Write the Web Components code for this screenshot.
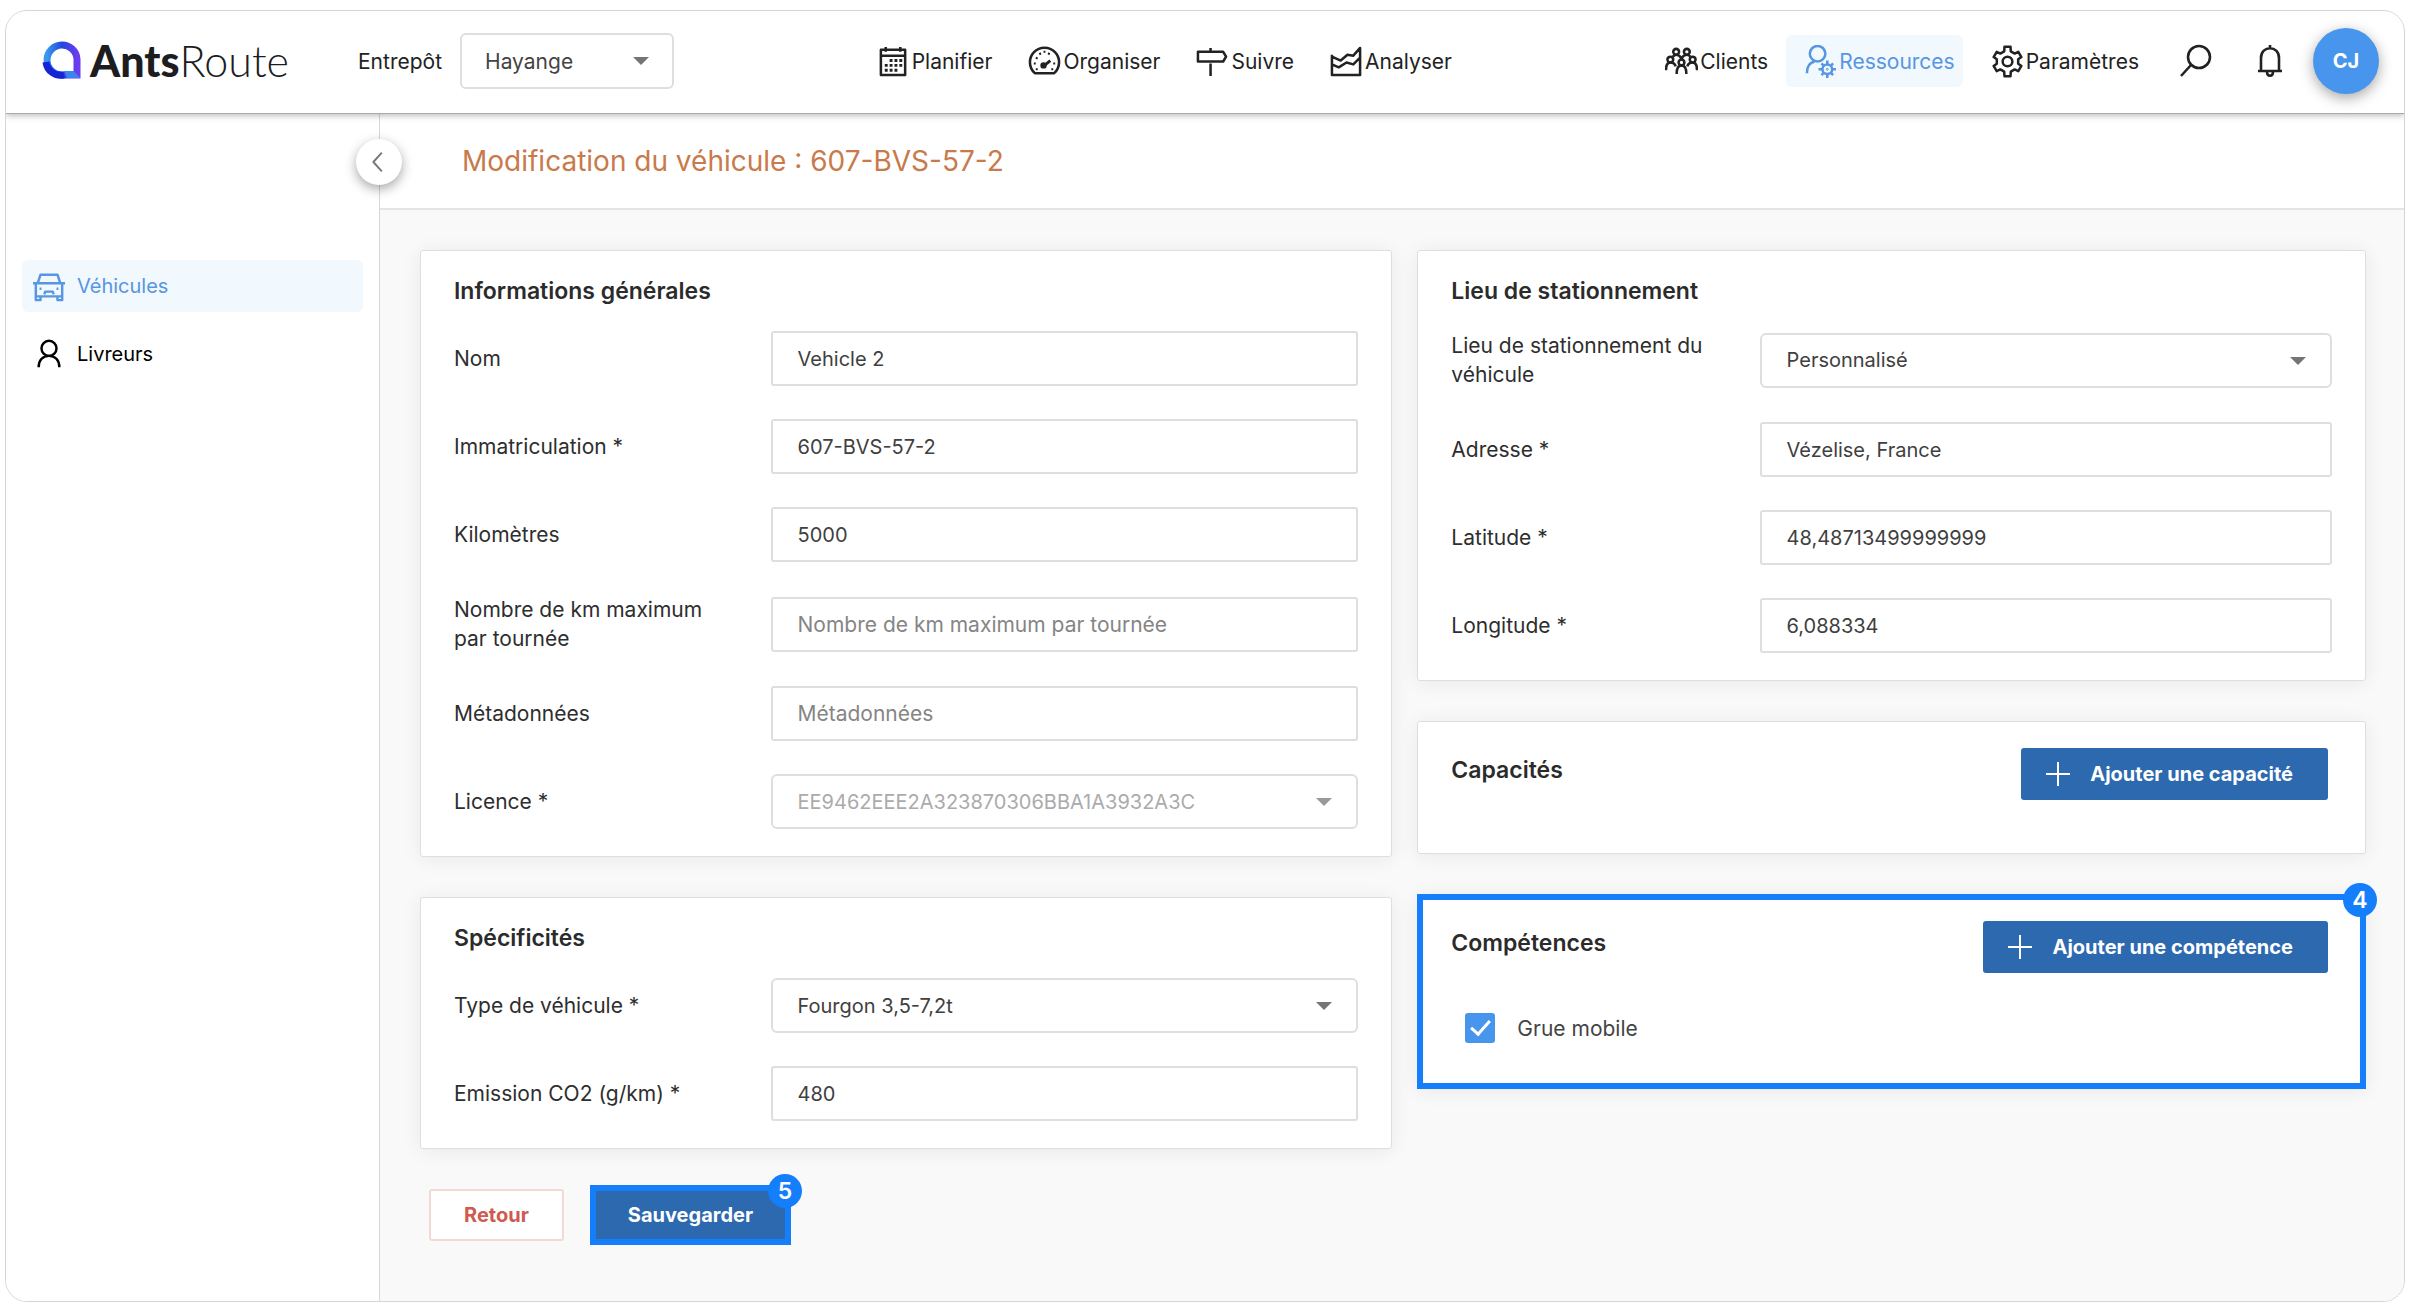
<!DOCTYPE html>
<html lang="fr">
<head>
<meta charset="utf-8">
<meta name="viewport" content="width=device-width, initial-scale=1">
<title>AntsRoute - Modification du véhicule</title>
<style>
    html {
        height: 100%;
    }

    body {
        margin: 0;
        min-height: 100%;
        display: flex;
        background: #fff;
        color: #2e2e2e;
        font-family: Inter, "Open Sans", sans-serif;
        font-size: 20px;
        --blue: #4795ec;
        --link: #5796e0;
        --primary: #2d69ae;
        --mark: #147efb;
        --line: #dedede;
        --label-size: 21px;
    }
</style>
</head>
<body>
<ants-app>
    <ants-header slot="header"></ants-header>
    <ants-sidebar slot="sidebar"></ants-sidebar>
    <span slot="title">Modification du véhicule : 607-BVS-57-2</span>

    <ants-card slot="left" heading="Informations générales">
        <form-field label="Nom" value="Vehicle 2"></form-field>
        <form-field label="Immatriculation *" value="607-BVS-57-2"></form-field>
        <form-field label="Kilomètres" value="5000"></form-field>
        <form-field label="Nombre de km maximum par tournée" placeholder="Nombre de km maximum par tournée"></form-field>
        <form-field label="Métadonnées" placeholder="Métadonnées"></form-field>
        <form-field label="Licence *" type="select" value="EE9462EEE2A323870306BBA1A3932A3C" disabled></form-field>
    </ants-card>
    <ants-card slot="left" heading="Spécificités">
        <form-field label="Type de véhicule *" type="select" value="Fourgon 3,5-7,2t"></form-field>
        <form-field label="Emission CO2 (g/km) *" value="480"></form-field>
    </ants-card>

    <ants-card slot="right" heading="Lieu de stationnement">
        <form-field label="Lieu de stationnement du véhicule" type="select" value="Personnalisé"></form-field>
        <form-field label="Adresse *" value="Vézelise, France"></form-field>
        <form-field label="Latitude *" value="48,48713499999999"></form-field>
        <form-field label="Longitude *" value="6,088334"></form-field>
    </ants-card>
    <ants-card slot="right" heading="Capacités" action>
        <ants-button slot="action" icon="plus">Ajouter une capacité</ants-button>
    </ants-card>
    <step-mark slot="right" step="4">
        <ants-card heading="Compétences" action>
            <ants-button slot="action" icon="plus">Ajouter une compétence</ants-button>
            <check-field>Grue mobile</check-field>
        </ants-card>
    </step-mark>

    <ants-button slot="actions" variant="danger">Retour</ants-button>
    <step-mark slot="actions" step="5" outset>
        <ants-button>Sauvegarder</ants-button>
    </step-mark>
</ants-app>

<script>
const ICONS = {
    calendar: `<path d="M4 5h25v26H4zM4 11h25M9 2v5M24 2v5"/>
        <path stroke-width="3" stroke-dasharray="3 2" d="M13 16h13M8 21h18M8 26h13"/>`,
    gauge: `<path d="M7 29a15 15 0 1 1 20 0z"/>
        <path stroke-width="3" d="M17 21l6-5"/><circle cx="16" cy="21" r="2" fill="currentColor"/>
        <path stroke-width="2" d="M6 19h2M8 13l2 1M12 8l1 2M17 6v2M22 8l-1 2M26 19h2M8 25h2M24 25h2"/>`,
    sign: `<path d="M2 7h26l3 5-3 5H2zM15 3v4M15 19v13"/>`,
    chart: `<path d="M2 10v21h29V3l-7 8-6-1-7 6-9-4M2 20l7 3 8-5 7 2 7-7"/>`,
    clients: `<circle cx="11.5" cy="7" r="3"/><circle cx="22.5" cy="7" r="3"/>
        <circle cx="5.5" cy="15" r="3"/><circle cx="28.5" cy="15" r="3"/><circle cx="17" cy="18" r="3"/>
        <path d="M1 26c0-5 1-8 4.500-8s5 2 5.500 4M33 26c0-5-1-8-4.500-8s-5 2-5.500 4M12 30c0-6 2-9 5-9s5 3 5 9"/>
        <path d="M8 12c1-1 2-2 3.500-2s4 1 5.500 4c1.500-3 3-4 5.500-4s2.500 1 3.500 2"/>`,
    resources: `<circle cx="14" cy="9" r="8"/><path d="M3 29c0-7 3-11 8-12"/>
        <circle cx="24" cy="25" r="5"/><circle cx="24" cy="25" r="1" stroke-width="1"/>
        <path d="M24 16v4M24 30v4M15 25h4M29 25h4M18 19l2 2M28 29l2 2M30 19l-2 2M20 29l-2 2"/>`,
    gear: `<circle cx="17" cy="17" r="5"/>
        <path d="M13.900 1.800h6.200l.3 4.700 4 2.300 3.700-1.800 3.200 5.400-3.300 2.300v4.600l3.300 2.300-3.200 5.400-3.700-1.800-4 2.300-.3 4.700h-6.200l-.3-4.700-4-2.300-3.700 1.800-3.200-5.400 3.300-2.300v-4.600l-3.300-2.300 3.200-5.400 3.700 1.800 4-2.300z"/>`,
    search: `<circle cx="20" cy="13" r="11"/><path d="M12 21L2 32"/>`,
    bell: `<path d="M17 1v3M5 27h24M8 27V14c0-13 18-13 18 0v13M14 28c0 5 6 5 6 0"/>`,
    car: `<path d="M5 14l3-9h18l3 9M0 14h34M3 14v14h28V14M3 28v4h5v-4M26 28v4h5v-4"/>
        <path d="M12 26l1-3h8l1 3M7 20h2M25 20h2"/>`,
    driver: `<circle cx="17" cy="11" r="8"/><path d="M6 31c0-7 4-12 11-12s11 5 11 12"/>`,
    plus: `<path stroke-width="2" d="M17 5v24M5 17h24"/>`,
    left: `<path stroke-width="2" d="M20 7l-9 10 9 10"/>`
};

function icon(name) {
    return `<svg class="icon" viewBox="0 0 34 34" aria-hidden="true" fill="none" stroke="currentColor" stroke-width="2.6" stroke-linejoin="round">${ICONS[name]}</svg>`;
}

class AntsApp extends HTMLElement {
    constructor() {
        super();
        this.attachShadow({mode: 'open'});
        this.shadowRoot.innerHTML = `
            <style>
                :host {
                    flex: 1;
                    display: flex;
                    flex-direction: column;
                    margin: 10px 5px 7px;
                    border: 1px solid #d4d6d5;
                    border-radius: 22px;
                    overflow: hidden;
                    min-width: 0;
                }

                .body {
                    flex: 1;
                    display: grid;
                    grid-template-columns: 373px 1fr;
                }

                .page {
                    position: relative;
                    border-left: 1px solid #d8d8d8;
                    background: #f9f9f9;
                }

                .top {
                    display: flex;
                    align-items: center;
                    height: 94px;
                    padding-left: 82px;
                    background: #fff;
                    border-bottom: 2px solid #e4e4e4;
                }

                h1 {
                    margin: 0;
                    font-size: 28px;
                    font-weight: 400;
                    color: #c87a4b;
                }

                .collapse {
                    position: absolute;
                    left: -24px;
                    top: 25px;
                    width: 46px;
                    height: 46px;
                    padding: 7px;
                    border: 0;
                    border-radius: 50%;
                    background: #fff;
                    color: #777;
                    box-shadow: 0 4px 12px rgba(0, 0, 0, .35);
                }

                .icon {
                    display: block;
                    width: 32px;
                    height: 32px;
                }

                .columns {
                    display: grid;
                    grid-template-columns: 41fr 40fr;
                    gap: 25px;
                    padding: 40px 38px 40px 40px;
                }

                .column {
                    display: flex;
                    flex-direction: column;
                    gap: 40px;
                    min-width: 0;
                }

                .actions {
                    display: flex;
                    gap: 30px;
                    padding-left: 9px;
                }
            </style>
            <slot name="header"></slot>
            <div class="body">
                <slot name="sidebar"></slot>
                <main class="page">
                    <div class="top"><h1><slot name="title"></slot></h1></div>
                    <button class="collapse" aria-label="Réduire le menu">${icon('left')}</button>
                    <div class="columns">
                        <div class="column">
                            <slot name="left"></slot>
                            <div class="actions"><slot name="actions"></slot></div>
                        </div>
                        <div class="column"><slot name="right"></slot></div>
                    </div>
                </main>
            </div>
        `;
    }
}

class AntsHeader extends HTMLElement {
    constructor() {
        super();
        this.attachShadow({mode: 'open'});
        this.shadowRoot.innerHTML = `
            <style>
                :host {
                    position: relative;
                    z-index: 1;
                    display: grid;
                    grid-template-columns: 5fr 9fr;
                    align-items: center;
                    height: 100px;
                    padding: 0 25px 2px 36px;
                    background: #fff;
                    border-bottom: 1px solid #a6aba8;
                    box-shadow: 0 2px 6px rgba(0, 0, 0, .25);
                    color: #222;
                    font-size: var(--label-size);
                }

                .group,
                .links {
                    display: flex;
                    align-items: center;
                }

                .brand {
                    display: flex;
                    align-items: center;
                    gap: 9px;
                    width: 316px;
                    color: #1d1d1f;
                    font-family: Lato, sans-serif;
                    font-size: 43px;
                    line-height: 50px;
                    text-decoration: none;
                }

                .brand svg {
                    width: 39px;
                    height: 39px;
                    margin-bottom: 4px;
                }

                .brand b {
                    font-weight: 900;
                }

                .brand span span {
                    font-weight: 300;
                }

                label {
                    margin-right: 18px;
                }

                .depot {
                    position: relative;
                    display: flex;
                }

                .depot::after {
                    content: "";
                    position: absolute;
                    right: 25px;
                    top: 24px;
                    border: 8px solid transparent;
                    border-top-color: #757575;
                    border-bottom: 0;
                    pointer-events: none;
                }

                select {
                    appearance: none;
                    width: 214px;
                    height: 56px;
                    padding: 0 23px;
                    border: 2px solid var(--line);
                    border-radius: 6px;
                    background: #fff;
                    color: #444;
                    font: inherit;
                }

                .bar {
                    display: flex;
                    align-items: center;
                    justify-content: space-between;
                }

                .links {
                    gap: 36px;
                }

                .links.end {
                    gap: 10px;
                }

                .tools {
                    display: flex;
                    align-items: center;
                    gap: 26px;
                    margin-left: 8px;
                }

                .round {
                    display: flex;
                    padding: 0 0 0 14px;
                    border: 0;
                    background: none;
                    color: inherit;
                }

                .icon {
                    width: 34px;
                    height: 34px;
                }

                .avatar {
                    width: 66px;
                    height: 66px;
                    border: 0;
                    border-radius: 50%;
                    background: var(--blue);
                    color: #fff;
                    font: inherit;
                    font-size: 20px;
                    font-weight: 700;
                    box-shadow: 0 4px 14px rgba(0, 0, 0, .35);
                }
            </style>
            <div class="group">
                <a class="brand" href="#">
                    <svg viewBox="0 0 39 39" aria-hidden="true">
                        <defs>
                            <linearGradient id="ring" x1="0" y1="0" x2="1" y2="0">
                                <stop offset="0" stop-color="#3a97ee"/>
                                <stop offset=".5" stop-color="#2347dc"/>
                                <stop offset="1" stop-color="#6a3df0"/>
                            </linearGradient>
                        </defs>
                        <path d="M35 35H19A15 15 0 1 1 35 19z" fill="none" stroke="url(#ring)" stroke-width="7"/>
                        <path d="M4 22A15 15 0 0 0 22 35" fill="none" stroke="#1724d6" stroke-width="7"/>
                        <path d="M22 31h10l6 7H25z" fill="#3d83ee"/>
                    </svg>
                    <span><b>Ants</b><span>Route</span></span>
                </a>
                <label for="depot">Entrepôt</label>
                <div class="depot"><select id="depot"><option>Hayange</option></select></div>
            </div>
            <div class="bar">
                <nav class="links">
                    <nav-link icon="calendar">Planifier</nav-link>
                    <nav-link icon="gauge">Organiser</nav-link>
                    <nav-link icon="sign">Suivre</nav-link>
                    <nav-link icon="chart">Analyser</nav-link>
                </nav>
                <div class="links end">
                    <nav-link icon="clients" boxed>Clients</nav-link>
                    <nav-link icon="resources" boxed active>Ressources</nav-link>
                    <nav-link icon="gear" boxed>Paramètres</nav-link>
                    <div class="tools">
                        <button class="round" aria-label="Rechercher">${icon('search')}</button>
                        <button class="round" aria-label="Notifications">${icon('bell')}</button>
                        <button class="avatar">CJ</button>
                    </div>
                </div>
            </div>
        `;
    }
}

class NavLink extends HTMLElement {
    constructor() {
        super();
        this.attachShadow({mode: 'open'});
    }

    connectedCallback() {
        this.shadowRoot.innerHTML = `
            <style>
                :host {
                    display: block;
                }

                a {
                    display: flex;
                    align-items: center;
                    gap: 2px;
                    height: 52px;
                    border-radius: 6px;
                    color: inherit;
                    text-decoration: none;
                }

                :host([boxed]) a {
                    padding: 0 8px 0 18px;
                }

                :host([active]) a {
                    background: #f1f8fe;
                    color: var(--link);
                }

                .icon {
                    width: 33px;
                    height: 33px;
                }
            </style>
            <a href="#">${icon(this.getAttribute('icon'))}<slot></slot></a>
        `;
    }
}

class AntsSidebar extends HTMLElement {
    constructor() {
        super();
        this.attachShadow({mode: 'open'});
        this.shadowRoot.innerHTML = `
            <style>
                :host {
                    display: block;
                    padding: 146px 16px 0;
                    background: #fff;
                    color: #000;
                }

                nav {
                    display: flex;
                    flex-direction: column;
                    gap: 16px;
                }

                a {
                    display: flex;
                    align-items: center;
                    gap: 12px;
                    height: 52px;
                    padding-left: 11px;
                    border-radius: 6px;
                    color: inherit;
                    text-decoration: none;
                }

                a.active {
                    background: #f1f8fe;
                    color: var(--link);
                }

                .icon {
                    width: 32px;
                    height: 32px;
                }
            </style>
            <nav>
                <a class="active" href="#">${icon('car')}Véhicules</a>
                <a href="#">${icon('driver')}Livreurs</a>
            </nav>
        `;
    }
}

class AntsCard extends HTMLElement {
    constructor() {
        super();
        this.attachShadow({mode: 'open'});
    }

    connectedCallback() {
        this.shadowRoot.innerHTML = `
            <style>
                :host {
                    display: block;
                    padding: 26px 33px 27px;
                    border: 1px solid var(--line);
                    border-radius: 3px;
                    background: #fff;
                    box-shadow: 0 2px 20px rgba(0, 0, 0, .07);
                }

                header {
                    display: flex;
                    justify-content: space-between;
                    align-items: flex-start;
                    margin-bottom: 27px;
                }

                :host([action]) header {
                    padding-right: 4px;
                }

                h2 {
                    margin: 0;
                    font-size: 23px;
                    line-height: 28px;
                    font-weight: 600;
                    color: #2b2b2b;
                }

                header {
                    margin-bottom: 26px;
                }

                :host([action]) h2 {
                    padding-top: 8px;
                }

                .content {
                    display: flex;
                    flex-direction: column;
                    gap: 33px;
                }
            </style>
            <header><h2>${this.getAttribute('heading')}</h2><slot name="action"></slot></header>
            <div class="content"><slot></slot></div>
        `;
    }
}

class FormField extends HTMLElement {
    constructor() {
        super();
        this.attachShadow({mode: 'open'});
    }

    control() {
        const value = this.getAttribute('value') || '';
        if (this.getAttribute('type') === 'select') {
            const disabled = this.hasAttribute('disabled') ? 'disabled' : '';
            return `<div class="select"><select id="field" ${disabled}><option>${value}</option></select></div>`;
        }
        return `<input id="field" type="text" value="${value}" placeholder="${this.getAttribute('placeholder') || ''}">`;
    }

    connectedCallback() {
        this.shadowRoot.innerHTML = `
            <style>
                :host {
                    display: grid;
                    grid-template-columns: 35% 1fr;
                    align-items: center;
                }

                label {
                    padding-right: 40px;
                    font-size: var(--label-size);
                    line-height: 29px;
                }

                input,
                select {
                    box-sizing: border-box;
                    width: 100%;
                    height: 55px;
                    padding: 0 25px;
                    border: 2px solid var(--line);
                    border-radius: 3px;
                    background: #fff;
                    color: #404040;
                    font: inherit;
                }

                input:placeholder-shown {
                    font-size: var(--label-size);
                }

                input::placeholder {
                    color: #858585;
                }

                select {
                    appearance: none;
                    border-radius: 6px;
                }

                select:disabled {
                    color: #ababab;
                    opacity: 1;
                }

                .select {
                    position: relative;
                    display: flex;
                }

                .select::after {
                    content: "";
                    position: absolute;
                    right: 26px;
                    top: 24px;
                    border: 8px solid transparent;
                    border-top-color: #757575;
                    border-bottom: 0;
                    pointer-events: none;
                }

                :host([disabled]) .select::after {
                    border-top-color: #999;
                }
            </style>
            <label for="field">${this.getAttribute('label')}</label>
            ${this.control()}
        `;
    }
}

class CheckField extends HTMLElement {
    constructor() {
        super();
        this.attachShadow({mode: 'open'});
        this.shadowRoot.innerHTML = `
            <style>
                :host {
                    display: block;
                    padding-bottom: 4px;
                }

                label {
                    display: flex;
                    align-items: center;
                    gap: 22px;
                    height: 58px;
                    padding-left: 14px;
                    color: #444;
                    font-size: var(--label-size);
                }

                input {
                    appearance: none;
                    width: 30px;
                    height: 30px;
                    margin: 0;
                    border-radius: 3px;
                    background: var(--blue);
                    display: grid;
                    place-items: center;
                }

                input:checked::before {
                    content: "";
                    width: 8px;
                    height: 16px;
                    margin-bottom: 5px;
                    border: solid #fff;
                    border-width: 0 3px 3px 0;
                    transform: rotate(42deg);
                }
            </style>
            <label><input type="checkbox" checked><slot></slot></label>
        `;
    }
}

class AntsButton extends HTMLElement {
    constructor() {
        super();
        this.attachShadow({mode: 'open'});
    }

    connectedCallback() {
        const name = this.getAttribute('icon');
        this.shadowRoot.innerHTML = `
            <style>
                :host {
                    display: block;
                }

                button {
                    display: flex;
                    align-items: center;
                    gap: 15px;
                    height: 52px;
                    padding: 0 34px;
                    border: 0;
                    border-radius: 3px;
                    background: var(--primary);
                    color: #fff;
                    font: inherit;
                    font-weight: 700;
                    white-space: nowrap;
                }

                :host([icon]) button {
                    padding: 0 35px 0 20px;
                }

                :host([variant="danger"]) button {
                    padding: 0 33px;
                    border: 2px solid #f3d9d5;
                    background: #fff;
                    color: #cf5a50;
                }

                .icon {
                    width: 34px;
                    height: 34px;
                }
            </style>
            <button type="button">${name ? icon(name) : ''}<slot></slot></button>
        `;
    }
}

// Blue frame with a numbered badge around the slotted content
class StepMark extends HTMLElement {
    constructor() {
        super();
        this.attachShadow({mode: 'open'});
    }

    connectedCallback() {
        this.shadowRoot.innerHTML = `
            <style>
                :host {
                    position: relative;
                    display: block;
                }

                .ring {
                    position: absolute;
                    inset: 0;
                    border: 6px solid var(--mark);
                    pointer-events: none;
                }

                :host([outset]) .ring {
                    inset: -4px;
                }

                .badge {
                    position: absolute;
                    top: -17px;
                    right: -17px;
                    width: 34px;
                    height: 34px;
                    border-radius: 50%;
                    background: var(--mark);
                    color: #fff;
                    font-size: 23px;
                    font-weight: 600;
                    line-height: 34px;
                    text-align: center;
                }
            </style>
            <slot></slot>
            <div class="ring"><span class="badge">${this.getAttribute('step')}</span></div>
        `;
    }
}

customElements.define('nav-link', NavLink);
customElements.define('ants-header', AntsHeader);
customElements.define('ants-sidebar', AntsSidebar);
customElements.define('ants-card', AntsCard);
customElements.define('form-field', FormField);
customElements.define('check-field', CheckField);
customElements.define('ants-button', AntsButton);
customElements.define('step-mark', StepMark);
customElements.define('ants-app', AntsApp);
</script>
</body>
</html>
